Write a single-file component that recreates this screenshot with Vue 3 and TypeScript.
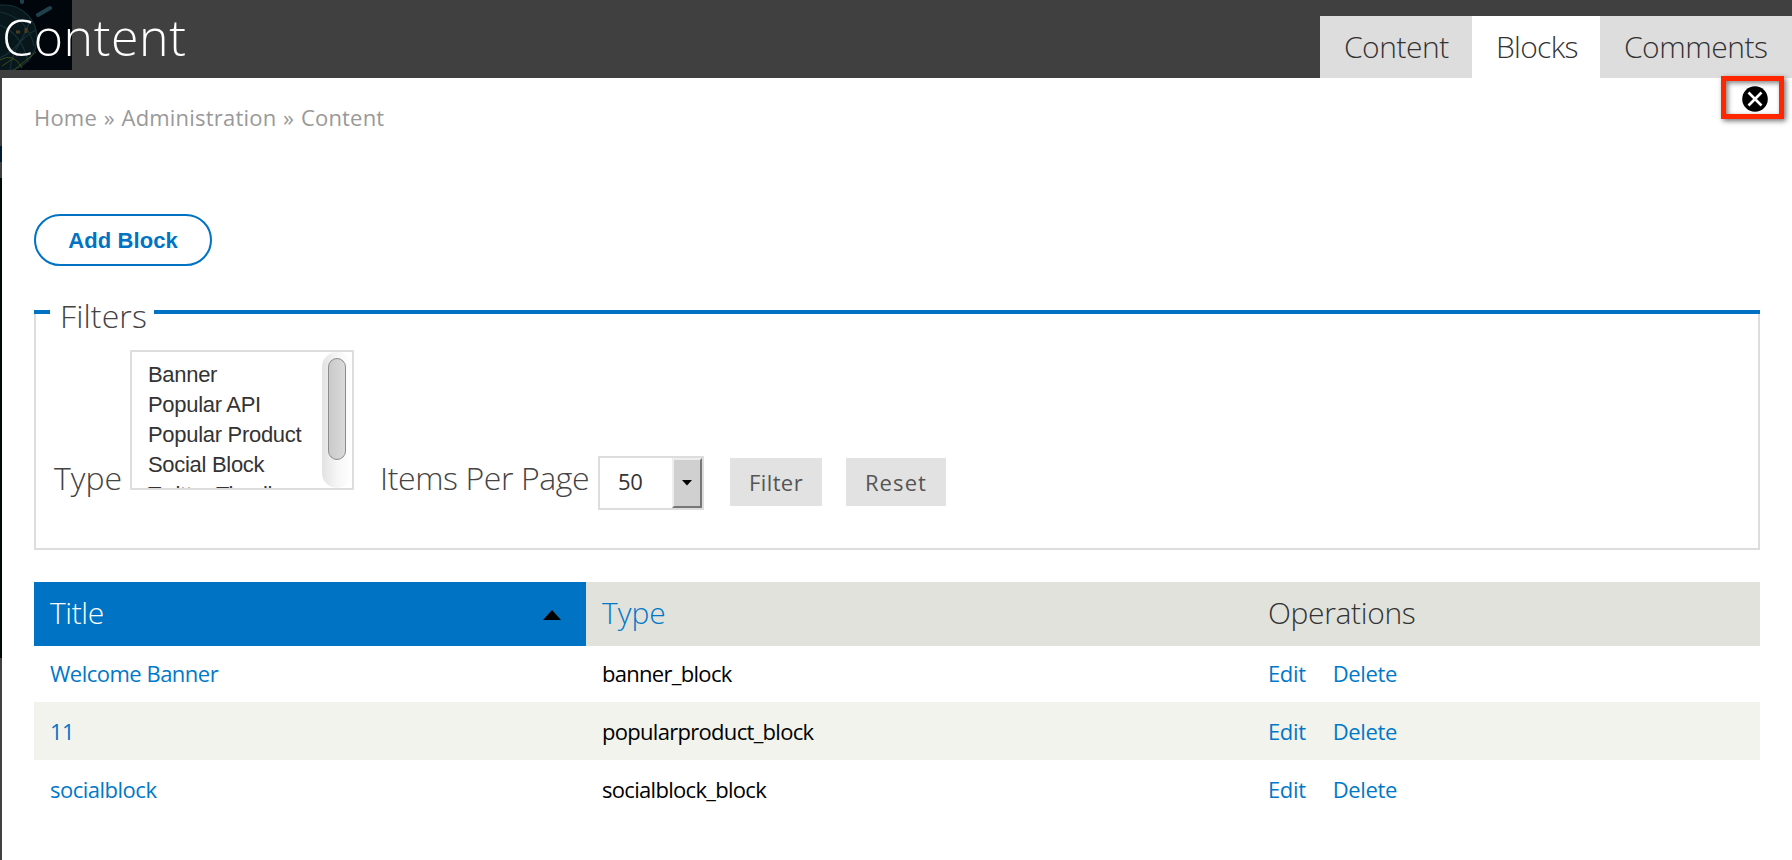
<script setup lang="ts">
interface Block {
  title: string
  type: string
}

const tabs: string[] = ['Content', 'Blocks', 'Comments']
const activeTab = 'Blocks'
const types: string[] = ['Banner', 'Popular API', 'Popular Product', 'Social Block', 'Twitter Timeline']
const blocks: Block[] = [
  { title: 'Welcome Banner', type: 'banner_block' },
  { title: '11', type: 'popularproduct_block' },
  { title: 'socialblock', type: 'socialblock_block' },
]
</script>

<template>
  <div class="page">
    <header class="topbar">
      <svg class="thumb" width="72" height="70" viewBox="0 0 72 70">
        <rect width="72" height="70" fill="#00060c" />
        <circle cx="4" cy="38" r="33" fill="#08171b" />
        <g fill="none" stroke="#163136" stroke-width="1.2">
          <circle cx="4" cy="38" r="33" />
          <path d="M0 12 Q28 18 34 46M0 25 Q22 34 28 62M0 58 Q22 48 30 20M10 70 Q14 40 36 30" />
        </g>
        <path d="M0 60 Q14 52 22 68M14 70 L36 52M2 66 L14 58" fill="none" stroke="#3c4a1c" />
        <path d="M16 32 h4 M26 28 v5" stroke="#4a3c20" stroke-width="3" />
        <path d="M38 15 L50 8M22 0 V2" stroke="#20404c" stroke-width="4" stroke-linecap="round" />
      </svg>
      <h1 class="title">Content</h1>
      <nav class="tabs">
        <a v-for="tab in tabs" :key="tab" class="tab" :class="{ active: tab === activeTab }">{{ tab }}</a>
      </nav>
    </header>

    <div class="close">
      <svg width="26" height="26" viewBox="0 0 26 26">
        <circle cx="13" cy="13" r="12.8" fill="#000" />
        <path d="M6.5 6.5 L19.5 19.5 M19.5 6.5 L6.5 19.5" stroke="#fff" stroke-width="2.6" />
      </svg>
    </div>

    <div class="body">
      <div class="edge"><i class="e1"></i><i class="e2"></i><i class="e3"></i><i class="e4"></i><i class="e5"></i></div>
      <main class="main">
        <p class="crumbs"><a>Home</a> » <a>Administration</a> » <a>Content</a></p>
        <a class="add"><span>Add Block</span></a>

        <section class="filters">
          <div class="legend"><i class="stub"></i><span>Filters</span><i class="rule"></i></div>
          <div class="controls">
            <label class="lbl type">Type</label>
            <div class="list">
              <ul>
                <li v-for="t in types" :key="t">{{ t }}</li>
              </ul>
              <div class="track"><div class="knob"></div></div>
            </div>
            <label class="lbl items">Items Per Page</label>
            <div class="select">
              <span>50</span>
              <div class="arrow"><svg width="10" height="6" viewBox="0 0 10 6"><path d="M0 0H10L5 5.5Z" /></svg></div>
            </div>
            <button class="btn filter">Filter</button>
            <button class="btn reset">Reset</button>
          </div>
        </section>

        <div class="table">
          <div class="row head">
            <div class="cell sorted">
              <a>Title</a>
              <svg width="18" height="10" viewBox="0 0 18 10"><path d="M9 0L18 10H0Z" /></svg>
            </div>
            <div class="cell"><a>Type</a></div>
            <div class="cell operations">Operations</div>
          </div>
          <div v-for="b in blocks" :key="b.title" class="row">
            <div class="cell name"><a>{{ b.title }}</a></div>
            <div class="cell kind">{{ b.type }}</div>
            <div class="cell ops"><a>Edit</a><a>Delete</a></div>
          </div>
        </div>
      </main>
    </div>
  </div>
</template>

<style>
body {
  margin: 0;
  background: #fff;
}
</style>

<style scoped>
.page {
  position: relative;
  width: 1792px;
  height: 860px;
  overflow: hidden;
  background: #fff;
  font-family: "Open Sans", "Noto Sans", sans-serif;
  font-size: 22px;
  color: #000;
}
.page * {
  box-sizing: border-box;
}
.topbar {
  position: relative;
  display: flex;
  justify-content: space-between;
  height: 78px;
  background: #404040;
}
.thumb {
  position: absolute;
  left: 0;
  top: 0;
}
.title {
  position: relative;
  margin: 0 0 0 2px;
  font-size: 50px;
  font-weight: 300;
  line-height: 75px;
  letter-spacing: 0.6px;
  color: #fff;
}
.tabs {
  display: flex;
  margin-top: 16px;
  height: 62px;
}
.tab {
  width: 152px;
  padding-left: 24px;
  background: #ddd;
  color: #333;
  font-size: 30px;
  font-weight: 300;
  line-height: 61px;
  letter-spacing: -0.5px;
}
.tab.active {
  width: 128px;
  background: #fff;
  letter-spacing: -0.7px;
}
.tab:last-child {
  width: 192px;
}
.close {
  position: absolute;
  z-index: 2;
  left: 1721px;
  top: 76px;
  width: 63px;
  height: 43px;
  padding: 5px 0 0 16px;
  border: 5px solid #ff2600;
  box-shadow: 2px 2px 5px rgba(0, 0, 0, 0.55), inset 2px 2px 5px rgba(0, 0, 0, 0.5);
}
.close svg {
  display: block;
}
.body {
  display: flex;
  height: 782px;
}
.edge {
  display: flex;
  flex-direction: column;
  width: 2px;
}
.e1 {
  height: 68px;
  background: #404040;
}
.e2 {
  height: 16px;
  background: #001a33;
}
.e3 {
  height: 16px;
  background: #3c3f3c;
}
.e4 {
  height: 480px;
  background: #000808;
}
.e5 {
  flex: 1;
  background: #404040;
}
.main {
  display: flex;
  flex-direction: column;
  align-items: flex-start;
  width: 1726px;
  margin-left: 32px;
}
.crumbs {
  margin: 24px 0 0;
  line-height: 31px;
  letter-spacing: 0.2px;
  word-spacing: 0.8px;
  color: #999;
}
.add {
  display: flex;
  align-items: center;
  justify-content: center;
  width: 178px;
  height: 52px;
  margin-top: 81px;
  padding-top: 2px;
  border: 2px solid #0073c4;
  border-radius: 26px;
  color: #0073c4;
  font: bold 22px "Liberation Sans", sans-serif;
  letter-spacing: 0.1px;
}
.filters {
  position: relative;
  width: 1726px;
  height: 240px;
  margin-top: 44px;
  border: 2px solid #ddd;
  border-top: 0;
}
.legend {
  display: flex;
  height: 4px;
  margin: 0 -2px;
  color: #444;
  font-size: 32px;
  font-weight: 300;
  line-height: 11px;
  letter-spacing: 0.1px;
}
.legend i {
  height: 4px;
  background: #0073c4;
}
.legend span {
  width: 104px;
  padding-left: 10px;
}
.stub {
  width: 16px;
}
.rule {
  flex: 1;
}
.controls {
  display: flex;
  align-items: flex-start;
  margin-top: 36px;
}
.lbl {
  margin-top: 106px;
  font-size: 32px;
  font-weight: 300;
  line-height: 44px;
  color: #444;
  white-space: nowrap;
}
.type {
  width: 76px;
  margin-left: 18px;
}
.items {
  width: 218px;
  margin-left: 26px;
  letter-spacing: -0.4px;
}
.list {
  display: flex;
  width: 224px;
  height: 140px;
  overflow: hidden;
  border: 2px solid #ddd;
}
.list ul {
  flex: 1;
  margin: 0;
  padding: 8px 0 0 16px;
  list-style: none;
  font: 22px/30px "Liberation Sans", sans-serif;
  letter-spacing: -0.3px;
  color: #333;
  white-space: nowrap;
}
.track {
  width: 30px;
  height: 136px;
  padding: 6px;
  border-radius: 15px;
  background: linear-gradient(90deg, #e2e2e2, #f6f6f6 50%, #fff);
}
.knob {
  width: 18px;
  height: 102px;
  border: 1.5px solid #8c8c8c;
  border-radius: 9px;
  background: linear-gradient(90deg, #cacaca, #dadada);
}
.select {
  display: flex;
  justify-content: space-between;
  width: 106px;
  height: 54px;
  margin-top: 106px;
  border: 2px solid #ddd;
  line-height: 47px;
  color: #333;
}
.select span {
  padding-left: 18px;
  letter-spacing: -0.4px;
}
.arrow {
  display: flex;
  align-items: center;
  justify-content: center;
  width: 30px;
  height: 50px;
  border: 2px solid;
  border-color: #eee #777 #777 #eee;
  background: #d0d0d0;
}
.btn {
  height: 48px;
  margin: 108px 0 0 26px;
  padding: 0;
  border: 0;
  background: #e2e2e2;
  font: 22px/46px "Open Sans", sans-serif;
  color: #555;
}
.filter {
  width: 92px;
  letter-spacing: 0.4px;
}
.reset {
  width: 100px;
  margin-left: 24px;
  letter-spacing: 1.1px;
}
.table {
  width: 1726px;
  margin-top: 32px;
}
.row {
  display: grid;
  grid-template-columns: 552px 666px 508px;
  height: 58px;
  line-height: 58px;
}
.row:nth-child(2) {
  height: 56px;
  line-height: 55px;
}
.row:nth-child(3) {
  background: #f2f3ec;
}
.cell {
  padding-left: 16px;
}
.row a {
  color: #0078c8;
}
.row.head {
  height: 64px;
  background: #e1e2dc;
  font-size: 30px;
  font-weight: 300;
  line-height: 61px;
  color: #333;
}
.row.head .sorted {
  display: flex;
  align-items: flex-start;
  justify-content: space-between;
  padding-right: 25px;
  background: #0073c4;
}
.sorted svg {
  margin-top: 28px;
}
.row.head .sorted a {
  color: #fff;
  letter-spacing: -0.4px;
}
.operations {
  letter-spacing: -0.35px;
}
.name {
  letter-spacing: -0.5px;
}
.kind {
  letter-spacing: -0.7px;
}
.ops {
  display: flex;
  gap: 27px;
  letter-spacing: -0.35px;
}
</style>
